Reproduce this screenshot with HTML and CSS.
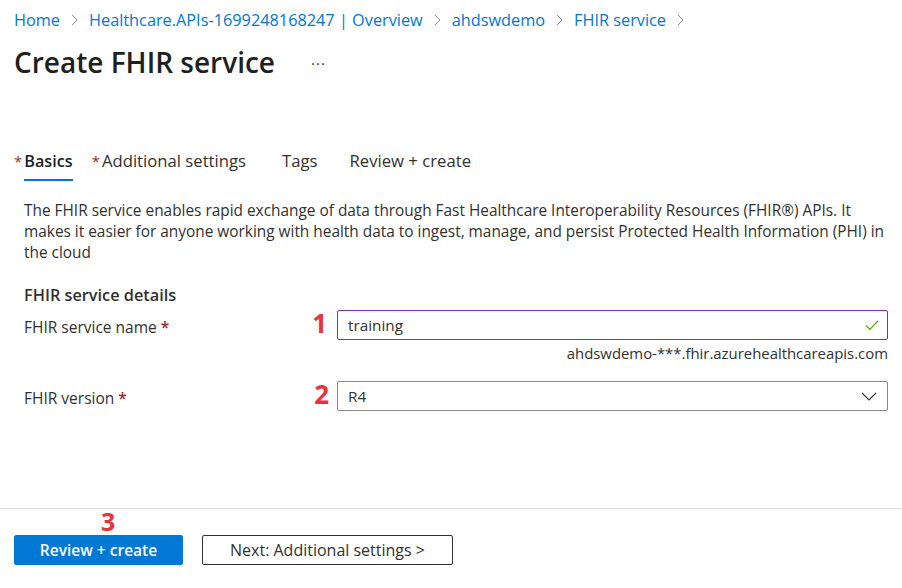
FILE: index.html
```html
<!DOCTYPE html>
<html lang="en">
<head>
<meta charset="utf-8">
<title>Create FHIR service</title>
<link rel="stylesheet" href="styles.css">
</head>
<body>
<div class="page">
  <nav class="breadcrumb">
    <a class="crumb">Home</a><svg class="sep" width="7" height="12" viewBox="0 0 7 12"><path d="M1 1 L6 6 L1 11" fill="none" stroke="#8a8886" stroke-width="1"/></svg>
    <a class="crumb">Healthcare.APIs-1699248168247 | Overview</a><svg class="sep" width="7" height="12" viewBox="0 0 7 12"><path d="M1 1 L6 6 L1 11" fill="none" stroke="#8a8886" stroke-width="1"/></svg>
    <a class="crumb">ahdswdemo</a><svg class="sep" width="7" height="12" viewBox="0 0 7 12"><path d="M1 1 L6 6 L1 11" fill="none" stroke="#8a8886" stroke-width="1"/></svg>
    <a class="crumb">FHIR service</a><svg class="sep" width="7" height="12" viewBox="0 0 7 12"><path d="M1 1 L6 6 L1 11" fill="none" stroke="#8a8886" stroke-width="1"/></svg>
  </nav>
  <div class="title-row">
    <h1 class="title">Create FHIR service</h1>
    <span class="more">···</span>
  </div>

  <div class="tabs">
    <div class="tab active"><span class="req">*</span><span class="tab-label">Basics</span></div>
    <div class="tab additional"><span class="req">*</span><span class="tab-label">Additional settings</span></div>
    <div class="tab tags"><span class="tab-label">Tags</span></div>
    <div class="tab"><span class="tab-label">Review + create</span></div>
  </div>

  <div class="content">
    <p class="desc">The FHIR service enables rapid exchange of data through Fast Healthcare Interoperability Resources (FHIR®) APIs. It makes it easier for anyone working with health data to ingest, manage, and persist Protected Health Information (PHI) in the cloud</p>

    <h2 class="section">FHIR service details</h2>

    <div class="field">
      <div class="label-cell">
        <span class="label">FHIR service name <span class="star">*</span></span>
        <span class="step">1</span>
      </div>
      <div class="control-cell">
        <div class="input valid">
          <span class="value">training</span>
          <svg class="check" width="14" height="12" viewBox="0 0 14 12"><path d="M1 6.5 L4.8 10.3 L13 1.8" fill="none" stroke="#57a300" stroke-width="1.2"/></svg>
        </div>
        <div class="hint">ahdswdemo-***.fhir.azurehealthcareapis.com</div>
      </div>
    </div>

    <div class="field field-2">
      <div class="label-cell">
        <span class="label">FHIR version <span class="star">*</span></span>
        <span class="step step-2">2</span>
      </div>
      <div class="control-cell">
        <div class="input select">
          <span class="value">R4</span>
          <svg class="chev" width="16" height="9" viewBox="0 0 16 9"><path d="M1 1 L8 8 L15 1" fill="none" stroke="#323130" stroke-width="1.1"/></svg>
        </div>
      </div>
    </div>
  </div>

  <footer class="footer">
    <div class="step3-row"><span class="step step3">3</span></div>
    <div class="buttons">
      <button class="btn primary">Review + create</button>
      <button class="btn secondary">Next: Additional settings &gt;</button>
    </div>
  </footer>
</div>
</body>
</html>
```

FILE: styles.css
```css
* { box-sizing: border-box; }
html, body { margin: 0; padding: 0; height: 100%; }
body {
  font-family: "Open Sans", "Noto Sans", "Liberation Sans", sans-serif;
  color: #323130;
  background: #fff;
}
.page {
  height: 100%;
  display: flex;
  flex-direction: column;
}
.breadcrumb {
  display: flex;
  align-items: center;
  padding: 0 14px;
  height: 40px;
  font-size: 16.3px;
  line-height: 22px;
}
.crumb { color: #0078d4; text-decoration: none; }
.sep {
  margin: 0 11px 0 11px;
}
.title-row {
  display: flex;
  align-items: center;
  padding: 0 14px;
  height: 44px;
}
.title {
  margin: 0;
  font-size: 28px;
  font-weight: 600;
  color: #201f1e;
  line-height: 38px;
}
.more {
  margin-left: 36px;
  font-size: 15px;
  color: #323130;
  letter-spacing: 1px;
  padding-top: 2px;
}
.tabs {
  display: flex;
  margin-top: 65px;
  padding-left: 14px;
  height: 51px;
  font-size: 16.7px;
}
.tab {
  display: flex;
  align-items: flex-start;
}
.tab.active { margin-right: 19px; }
.tab.additional { margin-right: 36px; }
.tab.tags { margin-right: 32px; }
.req { color: #a4262c; font-size: 15px; line-height: 24px; margin-right: 2px; }
.tab-label { line-height: 24px; }
.tab.active .tab-label {
  font-weight: 600;
  font-size: 16.2px;
  color: #201f1e;
  border-bottom: 2.5px solid #0078d4;
  padding-bottom: 6px;
}
.content {
  padding: 0 14px 0 24px;
}
.desc {
  margin: 0;
  font-size: 15.4px;
  line-height: 21px;
  color: #323130;
}
.section {
  margin: 21px 0 0;
  font-size: 16.3px;
  font-weight: 600;
  line-height: 22px;
  color: #323130;
}
.field {
  display: flex;
  margin-top: 4px;
}
.field-2 { margin-top: 15px; }
.label-cell {
  width: 313px;
  display: flex;
  justify-content: space-between;
  align-items: flex-start;
  padding-right: 10px;
  height: 30px;
}
.label {
  font-size: 15.5px;
  line-height: 30px;
  padding-top: 2px;
}
.star { color: #a4262c; font-weight: 600; }
.step {
  color: #e8323c;
  font-weight: 700;
  font-size: 26px;
  line-height: 26px;
  font-family: "Open Sans", "Noto Sans", sans-serif;
}
.step-2 { margin-right: -2px; }
.control-cell { flex: 1; }
.input {
  height: 30px;
  border: 1px solid #8a8886;
  border-radius: 2px;
  display: flex;
  align-items: center;
  justify-content: space-between;
  padding: 0 10px;
  font-size: 15.3px;
}
.input.valid { border-color: #8a2da5; }
.check { margin-right: -2px; }
.hint {
  text-align: right;
  font-size: 14.9px;
  line-height: 26px;
  color: #323130;
}
.footer {
  margin-top: auto;
  border-top: 1px solid #e1dfdd;
  padding: 0 14px 23px;
}
.step3-row { padding-left: 87px; height: 26px; }
.step3 { line-height: 24px; font-size: 25px; }
.buttons { display: flex; gap: 19px; }
.btn {
  height: 30px;
  font-family: inherit;
  font-size: 15.5px;
  font-weight: 600;
  border-radius: 2px;
  cursor: pointer;
}
.primary {
  width: 169px;
  background: #0078d4;
  color: #fff;
  border: 1px solid #0078d4;
}
.secondary {
  width: 251px;
  background: #fff;
  color: #323130;
  border: 1px solid #323130;
  font-weight: 500;
  font-size: 16px;
}
```
